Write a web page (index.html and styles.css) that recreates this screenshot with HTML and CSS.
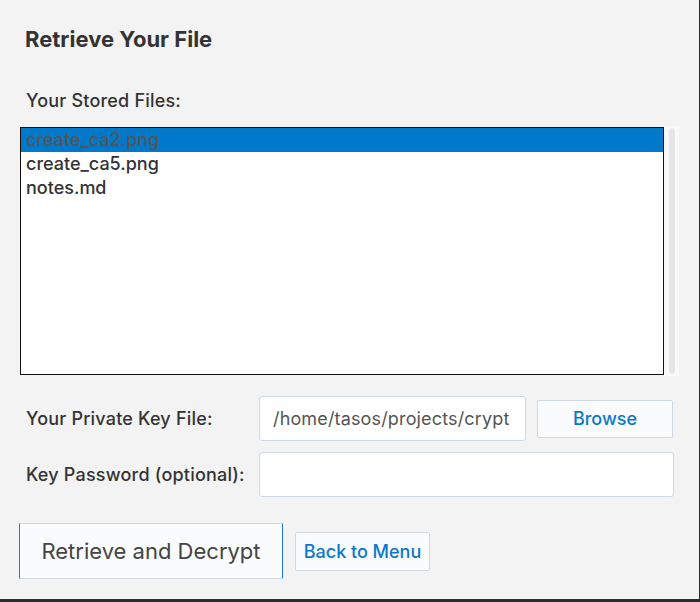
FILE: index.html
```html
<!DOCTYPE html>
<html>
<head>
<meta charset="utf-8">
<link rel="stylesheet" href="styles.css">
</head>
<body>
<div class="window">
  <h1 class="title">Retrieve Your File</h1>
  <div class="section-label">Your Stored Files:</div>
  <div class="list-row">
    <div class="listbox">
      <div class="item selected">create_ca2.png</div>
      <div class="item">create_ca5.png</div>
      <div class="item">notes.md</div>
    </div>
    <div class="scrollbar"><div class="track"></div></div>
  </div>
  <div class="form">
    <div class="label">Your Private Key File:</div>
    <div class="key-row">
      <div class="input key-input">/home/tasos/projects/crypt</div>
      <button class="btn browse">Browse</button>
    </div>
    <div class="label">Key Password (optional):</div>
    <div class="input pw-input"></div>
  </div>
  <div class="actions">
    <button class="btn primary">Retrieve and Decrypt</button>
    <button class="btn back">Back to Menu</button>
  </div>
</div>
</body>
</html>
```

FILE: styles.css
```css
html, body {
  margin: 0;
  padding: 0;
  background: #f3f3f3;
}
body {
  font-family: Inter, "Noto Sans", sans-serif;
  color: #333;
}
.window {
  box-sizing: border-box;
  width: 700px;
  height: 602px;
  border-right: 1px solid #2b2b2b;
  border-bottom: 3px solid #2b2b2b;
  padding: 26px 0 0 20px;
  display: flex;
  flex-direction: column;
}
.title {
  margin: 0 0 0 5px;
  font-size: 22px;
  line-height: 26px;
  font-weight: 700;
  color: #333;
}
.section-label {
  margin: 38px 0 0 6px;
  font-size: 18px;
  font-weight: 500;
  line-height: 22px;
  letter-spacing: 0.2px;
}
.list-row {
  margin-top: 15px;
  display: flex;
  align-items: stretch;
}
.listbox {
  box-sizing: border-box;
  width: 644px;
  height: 248px;
  background: #fff;
  border: 1px solid #111;
}
.item {
  height: 24px;
  line-height: 24px;
  padding-left: 5px;
  font-size: 18px;
  font-weight: 500;
  color: #333;
}
.item.selected {
  background: #0079cb;
  color: #555;
}
.scrollbar {
  width: 15px;
  margin-top: -1px;
  height: 250px;
  background: #f9f9f9;
  display: flex;
  justify-content: center;
  padding-top: 2px;
  box-sizing: border-box;
}
.track {
  width: 6px;
  height: 246px;
  background: #e6e6e8;
  border-radius: 3px;
}
.form {
  margin-top: 20px;
  display: grid;
  grid-template-columns: 239px 415px;
  row-gap: 11px;
  align-items: center;
}
.label {
  padding-left: 6px;
  font-size: 18px;
  font-weight: 500;
  letter-spacing: 0.2px;
  color: #333;
}
.key-row {
  display: flex;
  align-items: center;
  gap: 11px;
}
.input {
  box-sizing: border-box;
  height: 45px;
  background: #fff;
  border: 1px solid #cfd8e6;
  border-radius: 3px;
  font-size: 18px;
  letter-spacing: 0.15px;
  line-height: 43px;
  padding-left: 13px;
  color: #555;
  white-space: nowrap;
  overflow: hidden;
}
.key-input {
  width: 267px;
}
.pw-input {
  width: 415px;
}
.btn {
  box-sizing: border-box;
  font-family: Inter, "Noto Sans", sans-serif;
  background: #f9fbfc;
  border: 1px solid #cfd8e6;
  border-radius: 2px;
  padding: 0;
  color: #0a78cc;
  font-size: 18px;
  font-weight: 500;
}
.browse {
  width: 136px;
  height: 38px;
}
.actions {
  margin-top: 26px;
  margin-left: -1px;
  display: flex;
  align-items: center;
  gap: 12px;
}
.primary {
  width: 264px;
  height: 56px;
  border-left: 1px solid #1c7ad0;
  border-right: 1px solid #1c7ad0;
  border-radius: 1px;
  color: #444;
  font-size: 22px;
  font-weight: 400;
}
.back {
  width: 135px;
  height: 39px;
}
```
